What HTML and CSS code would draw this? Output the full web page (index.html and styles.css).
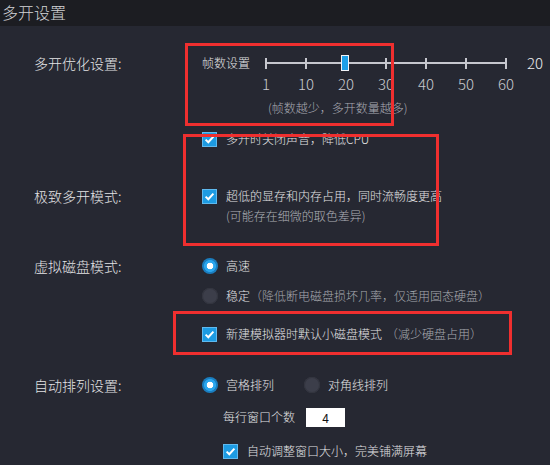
FILE: index.html
```html
<!DOCTYPE html>
<html lang="zh-CN">
<head>
<meta charset="utf-8">
<title>多开设置</title>
<link rel="stylesheet" href="styles.css">
</head>
<body>
<div class="header">多开设置</div>
<div class="page">
  <div class="row r1">
    <div class="label">多开优化设置:</div>
    <span class="small">帧数设置</span>
    <div class="track">
      <span class="tick"></span><span class="tick"></span><span class="tick"></span><span class="tick"></span><span class="tick"></span><span class="tick"></span><span class="tick"></span>
      <span class="handle"></span>
    </div>
    <span class="value">20</span>
  </div>
  <div class="row r2 noLabel">
    <div class="scale"><span>1</span><span>10</span><span>20</span><span>30</span><span>40</span><span>50</span><span>60</span></div>
  </div>
  <div class="row r3 noLabel">
    <span class="hint">(帧数越少，多开数量越多)</span>
  </div>
  <div class="row r4 noLabel">
    <span class="cb"><svg viewBox="0 0 15 15" width="15" height="15"><rect x="0.5" y="0.5" width="14" height="14" fill="#1d9be2" stroke="#5fb9ee"/><path d="M3.6 7.6 L6.3 10.2 L11.4 4.6" fill="none" stroke="#fff" stroke-width="2"/></svg></span>
    <span class="opt">多开时关闭声音，降低CPU</span>
  </div>
  <div class="row r5">
    <div class="label">极致多开模式:</div>
    <span class="cb"><svg viewBox="0 0 15 15" width="15" height="15"><rect x="0.5" y="0.5" width="14" height="14" fill="#1d9be2" stroke="#5fb9ee"/><path d="M3.6 7.6 L6.3 10.2 L11.4 4.6" fill="none" stroke="#fff" stroke-width="2"/></svg></span>
    <span class="opt">超低的显存和内存占用，同时流畅度更高</span>
  </div>
  <div class="row r6 noLabel">
    <span class="note">(可能存在细微的取色差异)</span>
  </div>
  <div class="row r7">
    <div class="label">虚拟磁盘模式:</div>
    <span class="radio on"></span>
    <span class="ropt">高速</span>
  </div>
  <div class="row r8 noLabel">
    <span class="radio"></span>
    <span class="ropt">稳定</span><span class="grey">（降低断电磁盘损坏几率，仅适用固态硬盘）</span>
  </div>
  <div class="row r9 noLabel">
    <span class="cb"><svg viewBox="0 0 15 15" width="15" height="15"><rect x="0.5" y="0.5" width="14" height="14" fill="#1d9be2" stroke="#5fb9ee"/><path d="M3.6 7.6 L6.3 10.2 L11.4 4.6" fill="none" stroke="#fff" stroke-width="2"/></svg></span>
    <span class="opt">新建模拟器时默认小磁盘模式</span><span class="grey gap">（减少硬盘占用）</span>
  </div>
  <div class="row r10">
    <div class="label">自动排列设置:</div>
    <span class="radio on"></span>
    <span class="ropt">宫格排列</span>
    <span class="radio second"></span>
    <span class="ropt">对角线排列</span>
  </div>
  <div class="row r11 noLabel indent">
    <span class="opt">每行窗口个数</span>
    <span class="num">4</span>
  </div>
  <div class="row r12 noLabel indent">
    <span class="cb"><svg viewBox="0 0 15 15" width="15" height="15"><rect x="0.5" y="0.5" width="14" height="14" fill="#1d9be2" stroke="#5fb9ee"/><path d="M3.6 7.6 L6.3 10.2 L11.4 4.6" fill="none" stroke="#fff" stroke-width="2"/></svg></span>
    <span class="opt">自动调整窗口大小，完美铺满屏幕</span>
  </div>
</div>
<div class="mark mark1"></div>
<div class="mark mark2"></div>
<div class="mark mark3"></div>
</body>
</html>
```

FILE: styles.css
```css
html, body {
  margin: 0;
  padding: 0;
}
body {
  width: 550px;
  height: 465px;
  overflow: hidden;
  background: #262832;
  font-family: "Noto Sans CJK SC", "Microsoft YaHei", sans-serif;
  font-weight: 300;
  color: #e2e2e4;
  position: relative;
}
.header {
  height: 26px;
  line-height: 25px;
  padding-left: 2px;
  font-size: 16px;
  color: #d2d3d6;
  background: #1c1d22;
}
.page {
  padding-left: 34px;
}
.row {
  display: flex;
  align-items: center;
  height: 16px;
  font-size: 12px;
  line-height: 16px;
  white-space: nowrap;
}
.noLabel {
  padding-left: 168px;
}
.indent {
  padding-left: 189px;
}
.label {
  width: 168px;
  flex: none;
  font-size: 14px;
  color: #e4e4e6;
}
.r1 { margin-top: 27px; height: 20px; }
.r2 { margin-top: 3px; }
.r3 { margin-top: 8px; }
.r4 { margin-top: 15px; }
.r5 { margin-top: 41px; }
.r6 { margin-top: 4px; }
.r7 { margin-top: 34px; }
.r8 { margin-top: 14px; }
.r9 { margin-top: 22px; }
.r10 { margin-top: 35px; }
.r11 { margin-top: 14px; height: 20px; }
.r12 { margin-top: 16px; }

.small {
  font-size: 12px;
  color: #e2e2e4;
}
.track {
  position: relative;
  width: 242px;
  height: 20px;
  margin-left: 15px;
  display: flex;
  justify-content: space-between;
  align-items: center;
}
.track::before {
  content: "";
  position: absolute;
  left: 0;
  right: 0;
  top: 9px;
  height: 2px;
  background: #c6c7ce;
}
.tick {
  width: 2px;
  height: 11px;
  background: #c6c7ce;
}
.handle {
  position: absolute;
  left: 76px;
  top: 2px;
  width: 6px;
  height: 14px;
  border: 1px solid #f2f4f8;
  background: #1c9fe8;
}
.value {
  margin-left: 20px;
  font-size: 15px;
  color: #ececee;
}
.scale {
  display: grid;
  grid-template-columns: repeat(7, 40px);
  margin-left: 44px;
  font-size: 15px;
  color: #c9cacf;
  text-align: center;
}
.hint {
  margin-left: 66px;
  color: #a9abb2;
}
.cb {
  display: flex;
  width: 15px;
  height: 15px;
  flex: none;
}
.opt {
  margin-left: 9px;
  color: #e2e2e4;
}
.indent .opt:first-child {
  margin-left: 0;
}
.note {
  margin-left: 24px;
  color: #aeb0b7;
}
.radio {
  width: 16px;
  height: 16px;
  flex: none;
  border-radius: 50%;
  background: #3c3e4a;
  box-shadow: inset 0 0 0 1px #33353f;
}
.radio.on {
  background: radial-gradient(circle, #ffffff 0 3px, #2aa6ee 3.6px 5.6px, #1a7ec0 6.3px 8px);
  box-shadow: none;
}
.radio.second {
  margin-left: 30px;
}
.ropt {
  margin-left: 8px;
  color: #e2e2e4;
}
.grey {
  color: #a6a8af;
}
.grey.gap {
  margin-left: 4px;
}
.num {
  margin-left: 11px;
  width: 39px;
  height: 19px;
  line-height: 19px;
  background: #ffffff;
  color: #111;
  font-weight: 400;
  text-align: center;
  font-size: 12px;
}
.mark {
  position: absolute;
  border: 3px solid #ef2f2f;
  box-sizing: border-box;
  pointer-events: none;
}
.mark1 {
  left: 185px;
  top: 43px;
  width: 209px;
  height: 83px;
}
.mark2 {
  left: 183px;
  top: 134px;
  width: 256px;
  height: 112px;
}
.mark3 {
  left: 173px;
  top: 311px;
  width: 339px;
  height: 44px;
}
```
